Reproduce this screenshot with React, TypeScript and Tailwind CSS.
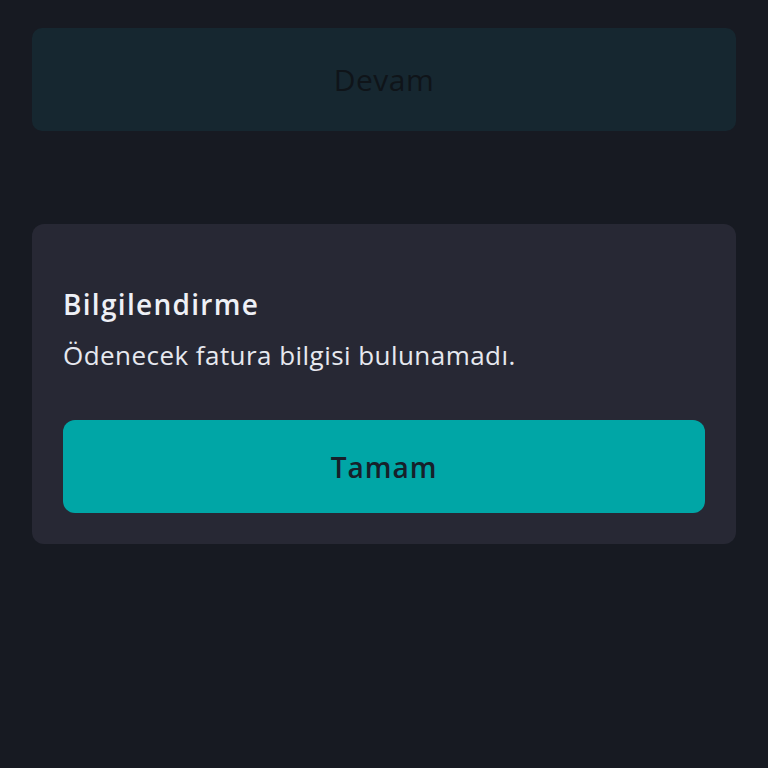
import React from "react";

export default function App() {
  return (
    <div className="w-[768px] h-[768px] bg-[#171a22] flex flex-col px-8 pt-7" style={{ fontFamily: "'Open Sans', 'Noto Sans', sans-serif" }}>
      <button className="h-[103px] w-full rounded-[10px] bg-[#162730] text-[30px] tracking-[0.5px] text-[#0f1419]">
        Devam
      </button>
      <div className="mt-[93px] w-full rounded-[12px] bg-[#272834] px-[31px] pt-[61px] pb-[31px] flex flex-col">
        <h2 className="text-[28px] leading-[38px] font-semibold tracking-[1.3px] text-[#eef0f6]">Bilgilendirme</h2>
        <p className="mt-[14px] text-[26px] leading-[36px] tracking-[0.45px] text-[#e6e8ef]">Ödenecek fatura bilgisi bulunamadı.</p>
        <button className="mt-[47px] h-[93px] w-full rounded-[12px] bg-[#00a6a6] text-[28px] font-semibold tracking-[1px] text-[#17202a]">
          Tamam
        </button>
      </div>
    </div>
  );
}
